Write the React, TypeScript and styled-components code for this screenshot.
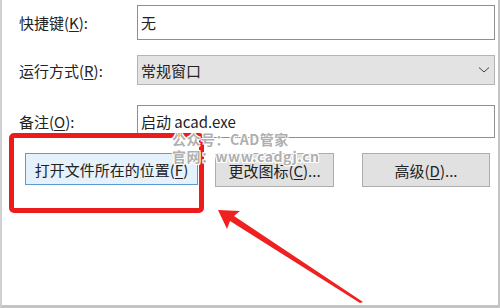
import React from 'react';
import styled, { createGlobalStyle } from 'styled-components';

const GlobalStyle = createGlobalStyle`
  html, body {
    margin: 0;
    padding: 0;
    background: #ffffff;
  }
  body {
    font-family: "Noto Sans CJK SC", "Noto Sans", sans-serif;
  }
`;

const Frame = styled.div`
  position: relative;
  width: 500px;
  height: 308px;
  box-sizing: border-box;
  background: #ffffff;
  border-left: 2px solid #d0d0d0;
  border-right: 2px solid #c4c4c4;
  border-bottom: 3px solid #c4c4c4;
  padding: 5px 3px 0 15px;
  display: flex;
  flex-direction: column;
  overflow: hidden;
  color: #222;
`;

const Row = styled.div<{ $h: number; $gap: number }>`
  display: grid;
  grid-template-columns: 120px 1fr;
  align-items: center;
  height: ${p => p.$h}px;
  margin-bottom: ${p => p.$gap}px;
`;

const Label = styled.label`
  font-size: 15px;
  line-height: 1;
  padding-left: 2px;
  u {
    text-decoration: underline;
    text-underline-offset: 2px;
  }
`;

const TextBox = styled.div`
  height: 100%;
  box-sizing: border-box;
  border: 1px solid #8f8f8f;
  background: #fff;
  font-size: 15px;
  display: flex;
  align-items: center;
  padding-left: 3px;
`;

const Combo = styled.div`
  height: 100%;
  box-sizing: border-box;
  border: 1px solid #b4b4b4;
  background: #e3e3e3;
  font-size: 15px;
  display: flex;
  align-items: center;
  justify-content: space-between;
  padding: 0 4px 0 3px;
`;

const ButtonRow = styled.div`
  display: flex;
  align-items: center;
  padding-left: 8px;
  height: 34px;
`;

const Button = styled.div<{ $w: number; $gapAfter: number; $focus?: boolean }>`
  width: ${p => p.$w}px;
  height: ${p => (p.$focus ? 32 : 34)}px;
  margin-right: ${p => p.$gapAfter}px;
  box-sizing: border-box;
  border: 1px solid ${p => (p.$focus ? '#5b9bd5' : '#adadad')};
  background: ${p => (p.$focus ? '#e5f1fb' : '#e1e1e1')};
  font-size: 15px;
  display: flex;
  align-items: center;
  justify-content: center;
  align-self: flex-start;
  u {
    text-decoration: underline;
    text-underline-offset: 2px;
  }
`;

const Highlight = styled.div`
  position: absolute;
  left: 7px;
  top: 133px;
  width: 195px;
  height: 80px;
  box-sizing: border-box;
  border: 5px solid #ec1c1c;
  border-radius: 5px;
`;

const Watermark = styled.div`
  position: absolute;
  left: 170px;
  top: 131px;
  font-size: 14px;
  font-weight: 700;
  line-height: 17px;
  color: rgba(140, 140, 140, 0.7);
  text-shadow: 1px 1px 0 #fff, -1px -1px 0 #fff, 1px -1px 0 #fff, -1px 1px 0 #fff;
  letter-spacing: 0.5px;
  white-space: nowrap;
`;

const Arrow = styled.svg`
  position: absolute;
  left: 0;
  top: 0;
`;

export default function App() {
  return (
    <>
      <GlobalStyle />
      <Frame>
        <Row $h={35} $gap={15}>
          <Label>
            快捷键(<u>K</u>):
          </Label>
          <TextBox>无</TextBox>
        </Row>
        <Row $h={30} $gap={20}>
          <Label>
            运行方式(<u>R</u>):
          </Label>
          <Combo>
            <span>常规窗口</span>
            <svg width="12" height="8" viewBox="0 0 12 8">
              <path d="M1 1.5 L6 6 L11 1.5" fill="none" stroke="#444" strokeWidth="1" />
            </svg>
          </Combo>
        </Row>
        <Row $h={33} $gap={15}>
          <Label>
            备注(<u>O</u>):
          </Label>
          <TextBox>启动 acad.exe</TextBox>
        </Row>
        <ButtonRow>
          <Button $w={173} $gapAfter={17} $focus>
            打开文件所在的位置(<u>F</u>)
          </Button>
          <Button $w={119} $gapAfter={28}>
            更改图标(<u>C</u>)...
          </Button>
          <Button $w={128} $gapAfter={0}>
            高级(<u>D</u>)...
          </Button>
        </ButtonRow>
        <Highlight />
        <Watermark>
          <div>公众号：CAD管家</div>
          <div>官网：www.cadgj.cn</div>
        </Watermark>
        <Arrow width="500" height="308" viewBox="0 0 500 308">
          <polygon
            points="216,210 238,211 232,216 361,302 358,303 228,221 225,229"
            fill="#ee2020"
          />
        </Arrow>
      </Frame>
    </>
  );
}
